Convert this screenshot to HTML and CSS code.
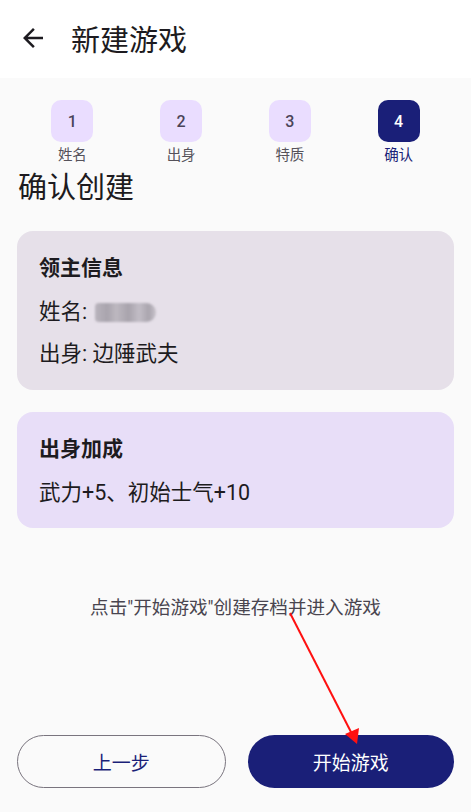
FILE: index.html
```html
<!DOCTYPE html>
<html lang="zh-CN">
<head>
    <meta charset="UTF-8">
    <meta name="viewport" content="width=device-width, initial-scale=1.0">
    <title>新建游戏</title>
    <link rel="stylesheet" href="styles.css">
</head>
<body>

<div class="app">
    <!-- Top bar -->
    <header class="top-bar">
        <svg class="back-icon" viewBox="0 0 24 24" width="30" height="30">
            <path d="M20 11H7.83l5.59-5.59L12 4l-8 8 8 8 1.41-1.41L7.83 13H20v-2z" fill="#1d1b20"/>
        </svg>
        <span class="top-title">新建游戏</span>
    </header>

    <main class="content">
        <!-- Steps -->
        <div class="steps">
            <div class="step">
                <div class="step-box">1</div>
                <div class="step-label">姓名</div>
            </div>
            <div class="step">
                <div class="step-box">2</div>
                <div class="step-label">出身</div>
            </div>
            <div class="step">
                <div class="step-box">3</div>
                <div class="step-label">特质</div>
            </div>
            <div class="step active">
                <div class="step-box">4</div>
                <div class="step-label">确认</div>
            </div>
        </div>

        <h2 class="page-heading">确认创建</h2>

        <div class="card card-info">
            <div class="card-title">领主信息</div>
            <div class="card-line">姓名: <span class="blurred"></span></div>
            <div class="card-line">出身: 边陲武夫</div>
        </div>

        <div class="card card-bonus">
            <div class="card-title">出身加成</div>
            <div class="card-line">武力+5、初始士气+10</div>
        </div>

        <p class="hint">点击"开始游戏"创建存档并进入游戏</p>

        <div class="actions">
            <button class="btn btn-outline">上一步</button>
            <button class="btn btn-filled">开始游戏</button>
        </div>
    </main>

    <!-- annotation arrow -->
    <svg class="annotation" width="471" height="812" viewBox="0 0 471 812">
        <line x1="290" y1="613" x2="352" y2="734" stroke="#ff1010" stroke-width="2"/>
        <polygon points="345,734 359,728 357,744" fill="#ff1010"/>
    </svg>
</div>

</body>
</html>
```

FILE: styles.css
```css
* {
    box-sizing: border-box;
}

body {
    margin: 0;
    font-family: Roboto, "Noto Sans CJK SC", sans-serif;
    background-color: #fafafa;
    color: #1d1b20;
}

.app {
    position: relative;
    width: 471px;
    height: 812px;
    display: flex;
    flex-direction: column;
    overflow: hidden;
}

.top-bar {
    height: 78px;
    background-color: #ffffff;
    display: flex;
    align-items: center;
    padding-left: 18px;
    flex-shrink: 0;
}

.back-icon {
    display: block;
    margin-top: -2px;
}

.top-title {
    font-size: 29px;
    margin-left: 23px;
    margin-top: -3px;
    color: #1d1b20;
}

.content {
    flex: 1;
    display: flex;
    flex-direction: column;
    padding: 22px 17px 24px;
}

.steps {
    display: grid;
    grid-template-columns: repeat(4, 1fr);
    padding: 0 1px;
}

.step {
    display: flex;
    flex-direction: column;
    align-items: center;
}

.step-box {
    width: 42px;
    height: 42px;
    border-radius: 10px;
    background-color: #eaddff;
    color: #4a4458;
    font-size: 16px;
    font-weight: 500;
    display: flex;
    align-items: center;
    justify-content: center;
}

.step-label {
    margin-top: 4px;
    font-size: 14.5px;
    line-height: 20px;
    color: #55525a;
}

.step.active .step-box {
    background-color: #1a1f78;
    color: #ffffff;
}

.step.active .step-label {
    color: #1a1f78;
}

.page-heading {
    margin: 5px 0 26px 1px;
    font-size: 29px;
    line-height: 34px;
    font-weight: 400;
    color: #1d1b20;
}

.card {
    border-radius: 16px;
    padding: 20px 22px;
}

.card-info {
    background-color: #e6e0e9;
    padding-bottom: 21px;
}

.card-bonus {
    margin-top: 22px;
    background-color: #e8def8;
}

.card-title {
    font-size: 21px;
    line-height: 34px;
    font-weight: 700;
    color: #1d1b20;
}

.card-line {
    margin-top: 12px;
    font-size: 21.5px;
    line-height: 30px;
    color: #1d1b20;
    display: flex;
    align-items: center;
}

.blurred {
    display: inline-block;
    width: 61px;
    height: 19px;
    margin-left: 8px;
    border-radius: 4px 10px 10px 4px;
    background: linear-gradient(90deg, #b9b4bd 0%, #a9a4ad 20%, #bdb8c0 35%, #a8a3ac 55%, #c2bdc6 72%, #aaa5ae 88%, #c7c2ca 100%);
    filter: blur(1px);
}

.hint {
    margin: 67px 0 0;
    text-align: center;
    font-size: 18.6px;
    line-height: 26px;
    color: #49454f;
}

.actions {
    margin-top: auto;
    display: flex;
    gap: 22px;
}

.btn {
    flex: 1;
    height: 53px;
    border-radius: 27px;
    font-family: inherit;
    font-size: 19px;
    cursor: pointer;
}

.btn-outline {
    background-color: transparent;
    border: 1px solid #79747e;
    color: #1a1f78;
}

.btn-filled {
    background-color: #1a1f78;
    border: none;
    color: #ffffff;
}

.annotation {
    position: absolute;
    top: 0;
    left: 0;
    pointer-events: none;
}
```
